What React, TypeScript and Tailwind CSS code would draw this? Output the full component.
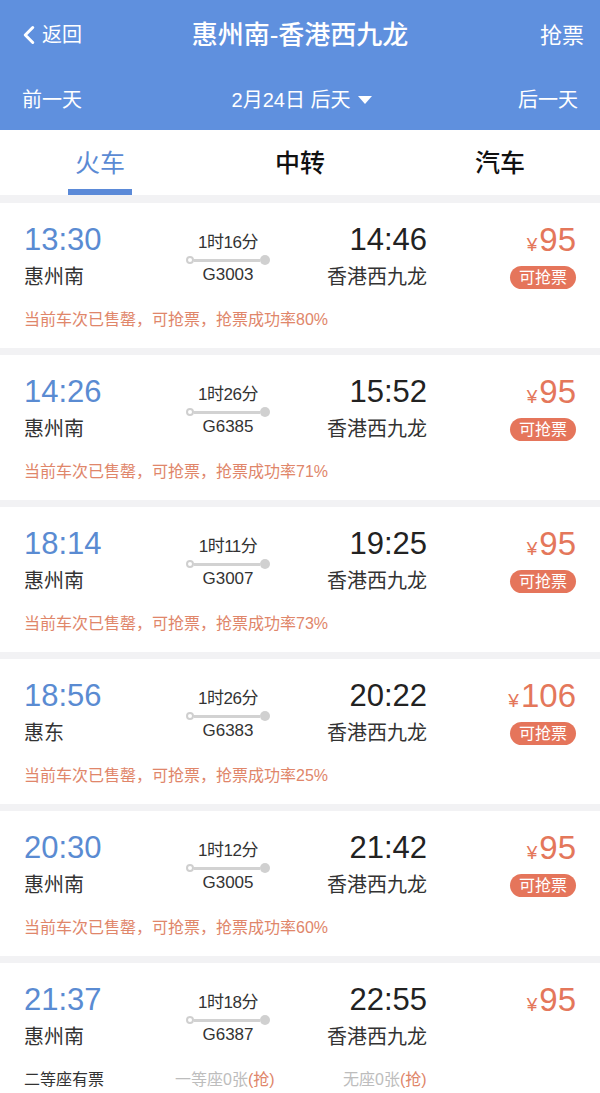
import { ChevronLeft } from "lucide-react";

type Train = {
	dep: string;
	from: string;
	dur: string;
	no: string;
	arr: string;
	price: string;
	rate?: string;
};

const trains: Train[] = [
	{ dep: "13:30", from: "惠州南", dur: "1时16分", no: "G3003", arr: "14:46", price: "95", rate: "80%" },
	{ dep: "14:26", from: "惠州南", dur: "1时26分", no: "G6385", arr: "15:52", price: "95", rate: "71%" },
	{ dep: "18:14", from: "惠州南", dur: "1时11分", no: "G3007", arr: "19:25", price: "95", rate: "73%" },
	{ dep: "18:56", from: "惠东", dur: "1时26分", no: "G6383", arr: "20:22", price: "106", rate: "25%" },
	{ dep: "20:30", from: "惠州南", dur: "1时12分", no: "G3005", arr: "21:42", price: "95", rate: "60%" },
	{ dep: "21:37", from: "惠州南", dur: "1时18分", no: "G6387", arr: "22:55", price: "95" },
];

const TrainCard = ({ t }: { t: Train }) => {
	return (
		<div className="bg-white px-6 pt-[19px] pb-[17px]">
			<div className="grid grid-cols-[149px_110px_144px_1fr]">
				<div className="flex flex-col">
					<div className="h-9 leading-9 text-[31px] text-[#5a8bd2]">{t.dep}</div>
					<div className="mt-[5px] h-7 leading-7 text-[20px] text-[#333]">{t.from}</div>
				</div>
				<div className="flex flex-col items-center pt-[11px]">
					<div className="h-5 leading-5 text-[17px] text-[#333] tracking-[-0.5px]">{t.dur}</div>
					<div className="mt-[2px] flex h-[10px] w-[84px] items-center">
						<span className="h-[8px] w-[8px] rounded-full border-2 border-[#cfcfcf] bg-white" />
						<span className="h-[3px] flex-1 bg-[#d2d2d2]" />
						<span className="h-[10px] w-[10px] rounded-full bg-[#d0d0d0]" />
					</div>
					<div className="h-5 leading-5 text-[17px] text-[#333]">{t.no}</div>
				</div>
				<div className="flex flex-col items-end">
					<div className="h-9 leading-9 text-[31px] text-[#222]">{t.arr}</div>
					<div className="mt-[5px] h-7 leading-7 text-[20px] text-[#333]">香港西九龙</div>
				</div>
				<div className="flex flex-col items-end">
					<div className="flex h-9 items-baseline leading-9 text-[#e4775b]">
						<span className="text-[19px] mr-[2px]">¥</span>
						<span className="text-[33px]">{t.price}</span>
					</div>
					{t.rate && (
						<div className="mt-[8px] h-[23px] w-[66px] rounded-full bg-[#e5755b] text-center text-[16px] leading-[23px] text-white">
							可抢票
						</div>
					)}
				</div>
			</div>
			{t.rate ? (
				<div className="mt-[18px] h-[22px] leading-[22px] text-[16px] text-[#e0866a]">
					当前车次已售罄，可抢票，抢票成功率{t.rate}
				</div>
			) : (
				<div className="mt-[18px] flex h-[22px] leading-[22px] text-[16px]">
					<span className="w-[151px] text-[#333]">二等座有票</span>
					<span className="w-[168px] text-[#bdbdbd]">
						一等座0张<span className="text-[#e0866a]">(抢)</span>
					</span>
					<span className="text-[#bdbdbd]">
						无座0张<span className="text-[#e0866a]">(抢)</span>
					</span>
				</div>
			)}
		</div>
	);
};

export default function App() {
	return (
		<div
			className="min-h-[1093px] w-[600px] bg-[#f2f2f4]"
			style={{ fontFamily: '"Liberation Sans", "Noto Sans CJK SC", sans-serif' }}
		>
			<div className="bg-[#5f90de] text-white">
				<div className="relative flex h-[70px] items-center justify-between pl-[14px] pr-4">
					<div className="flex items-center">
						<ChevronLeft size={30} strokeWidth={2.4} className="-mr-[2px]" />
						<span className="text-[20px]">返回</span>
					</div>
					<div className="absolute left-1/2 -translate-x-1/2 text-[26px] font-medium">
						惠州南-香港西九龙
					</div>
					<span className="text-[22px]">抢票</span>
				</div>
				<div className="flex h-[60px] items-center justify-between px-[22px] text-[20px]">
					<span>前一天</span>
					<span className="flex items-center pl-[4px]">
						2月24日 后天
						<svg width="14" height="9" viewBox="0 0 14 9" className="ml-[8px]">
							<path d="M0 0 H14 L7 8 Z" fill="white" />
						</svg>
					</span>
					<span>后一天</span>
				</div>
			</div>
			<div className="grid h-[65px] grid-cols-3 bg-white">
				<div className="flex flex-col items-center">
					<span className="mt-[17px] h-8 leading-8 text-[25px] text-[#5b8ad4]">火车</span>
					<span className="mt-[10px] h-[6px] w-[64px] bg-[#5b8ad8]" />
				</div>
				<div className="flex justify-center">
					<span className="mt-[17px] h-8 leading-8 text-[25px] font-medium text-[#111]">中转</span>
				</div>
				<div className="flex justify-center">
					<span className="mt-[17px] h-8 leading-8 text-[25px] font-medium text-[#111]">汽车</span>
				</div>
			</div>
			<div className="flex flex-col gap-[7px] pt-[8px]">
				{trains.map(t => (
					<TrainCard key={t.no} t={t} />
				))}
			</div>
		</div>
	);
}
